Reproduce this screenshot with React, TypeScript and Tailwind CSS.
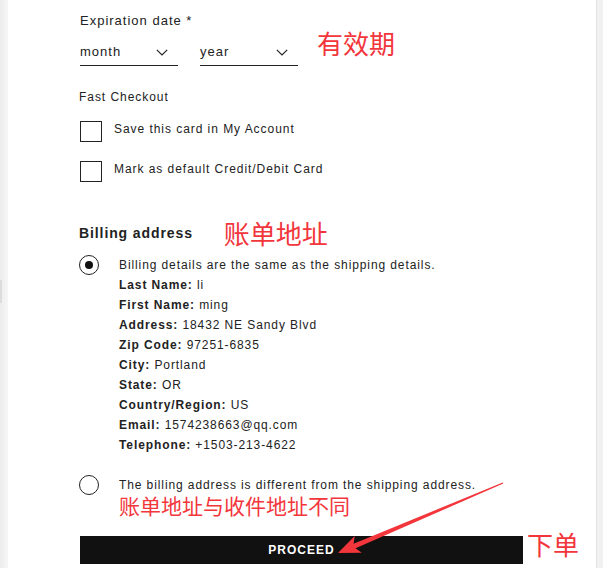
import React from "react";

const details = [
  { label: "Last Name:", value: "li" },
  { label: "First Name:", value: "ming" },
  { label: "Address:", value: "18432 NE Sandy Blvd" },
  { label: "Zip Code:", value: "97251-6835" },
  { label: "City:", value: "Portland" },
  { label: "State:", value: "OR" },
  { label: "Country/Region:", value: "US" },
  { label: "Email:", value: "1574238663@qq.com" },
  { label: "Telephone:", value: "+1503-213-4622" },
];

function Chevron() {
  return (
    <svg width="12" height="7" viewBox="0 0 12 7" fill="none">
      <polyline points="0.8,0.8 6,6 11.2,0.8" stroke="#222" strokeWidth="1.2" />
    </svg>
  );
}

function Select({ label }: { label: string }) {
  return (
    <div className="w-[98px] h-[27px] flex items-center justify-between border-b border-[#222] pr-[10px] text-[13px] tracking-[1px]">
      <span>{label}</span>
      <Chevron />
    </div>
  );
}

function Radio({ checked }: { checked?: boolean }) {
  return (
    <div className="w-[20px] h-[20px] shrink-0 rounded-full border-[1.5px] border-[#222] flex items-center justify-center">
      {checked && <div className="w-[8px] h-[8px] rounded-full bg-[#111]" />}
    </div>
  );
}

export default function App() {
  const font = { fontFamily: '"Liberation Sans", Arial, "Noto Sans CJK SC", sans-serif' };
  const red = "text-[#f2363c]";

  return (
    <div className="relative w-[603px] h-[568px] overflow-hidden flex bg-white text-[#222]" style={font}>
      {/* Left gutter */}
      <div className="w-[8px] shrink-0 bg-gradient-to-r from-[#ececec] to-[#f6f6f6] flex flex-col">
        <div className="h-[280px]" />
        <div className="w-[2px] h-[23px] bg-[#dcdcdc]" />
      </div>

      {/* Form */}
      <div className="flex-1 pl-[72px] pt-[11px] flex flex-col">
        <div className="text-[13px] leading-[20px] tracking-[1px]">Expiration date *</div>

        <div className="mt-[8px] flex items-start">
          <Select label="month" />
          <div className="ml-[22px]">
            <Select label="year" />
          </div>
          <span className={`ml-[19px] -mt-[10px] text-[26px] leading-[32px] ${red}`}>有效期</span>
        </div>

        <div className="mt-[21px] -ml-[1px] text-[12px] leading-[20px] tracking-[0.95px]">Fast Checkout</div>

        <div className="mt-[14px] flex items-start">
          <div className="w-[22px] h-[21px] border border-[#222]" />
          <span className="ml-[12px] text-[12px] leading-[16px] tracking-[0.95px]">Save this card in My Account</span>
        </div>
        <div className="mt-[19px] flex items-start">
          <div className="w-[22px] h-[21px] border border-[#222]" />
          <span className="ml-[12px] text-[12px] leading-[16px] tracking-[0.95px]">Mark as default Credit/Debit Card</span>
        </div>

        <div className="mt-[39px] -ml-[1px] flex items-start">
          <span className="mt-[2px] text-[14px] leading-[20px] font-bold tracking-[0.9px]">Billing address</span>
          <span className={`ml-[31px] text-[26px] leading-[28px] ${red}`}>账单地址</span>
        </div>

        <div className="mt-[6px] -ml-[1px] flex items-start">
          <Radio checked />
          <div className="ml-[20px] flex flex-col text-[12px] leading-[20px] tracking-[0.9px]">
            <span>Billing details are the same as the shipping details.</span>
            {details.map((d) => (
              <span key={d.label}>
                <b>{d.label}</b> {d.value}
              </span>
            ))}
          </div>
        </div>

        <div className="mt-[20px] -ml-[1px] flex items-start">
          <Radio />
          <div className="ml-[20px] flex flex-col">
            <span className="text-[12px] leading-[20px] tracking-[0.9px]">
              The billing address is different from the shipping address.
            </span>
            <span className={`text-[21px] leading-[24px] ${red}`}>账单地址与收件地址不同</span>
          </div>
        </div>

        <div className="mt-[17px] flex items-center">
          <button className="w-[443px] h-[28px] bg-[#111] text-white text-[12px] font-bold tracking-[1px] flex items-center justify-center">
            PROCEED
          </button>
          <span className={`ml-[4px] -mt-[8px] text-[26px] leading-[28px] ${red}`}>下单</span>
        </div>
      </div>

      {/* Right gutter */}
      <div className="w-[7px] shrink-0 bg-[#f1f1f1] border-l border-[#e2e2e2]" />

      {/* Annotation arrow */}
      <svg className="absolute inset-0 pointer-events-none" width="603" height="568" viewBox="0 0 603 568">
        <polygon
          points="338,553 361.7,552.7 355.6,548.3 503.3,483.5 502.7,482.5 353.6,543.7 354.7,536.1"
          fill="#f2363c"
        />
      </svg>
    </div>
  );
}
